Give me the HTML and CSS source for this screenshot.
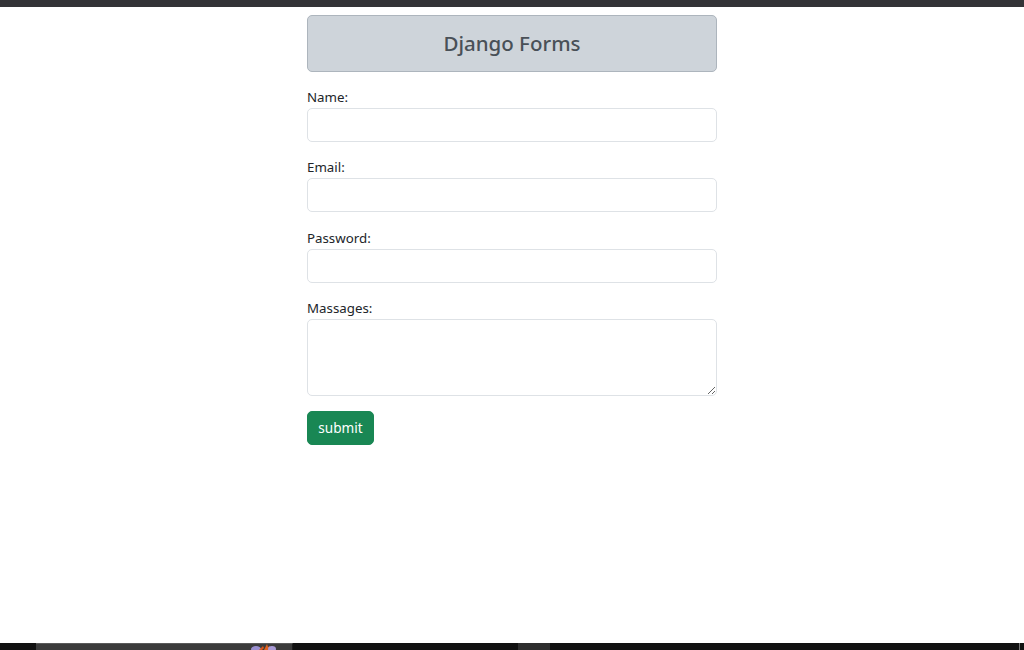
FILE: index.html
```html
<!DOCTYPE html>
<html lang="en">
<head>
<meta charset="utf-8">
<title>Django Forms</title>
<link rel="stylesheet" href="styles.css">
</head>
<body>
<div class="topbar"></div>
<main class="page">
  <div class="container">
    <div class="heading"><h1 class="title">Django Forms</h1></div>
    <form class="form">
      <div class="field">
        <label class="label" for="name">Name:</label>
        <input class="control" id="name" type="text">
      </div>
      <div class="field">
        <label class="label" for="email">Email:</label>
        <input class="control" id="email" type="email">
      </div>
      <div class="field">
        <label class="label" for="password">Password:</label>
        <input class="control" id="password" type="password">
      </div>
      <div class="field">
        <label class="label" for="msg">Massages:</label>
        <textarea class="control area" id="msg"></textarea>
      </div>
      <button class="btn" type="button">submit</button>
    </form>
  </div>
</main>
<div class="taskbar">
  <div class="tb-gap1"></div>
  <div class="tb-app">
    <svg class="tb-icon" width="26" height="7" viewBox="0 0 26 7"><ellipse cx="6" cy="6" rx="5" ry="3" fill="#9a8fd0"/><path d="M9 7 L13 3 L14 5 L12 7 Z" fill="#d9571b"/><path d="M14 7 L17 1 L18 4 L20 3 L19 7 Z" fill="#e2621e"/><ellipse cx="22" cy="6" rx="4" ry="3" fill="#a99ad6"/></svg>
  </div>
  <div class="tb-gap2"></div>
  <div class="tb-seg"></div>
  <div class="tb-gap3"></div>
  <div class="tb-end"></div>
</div>
</body>
</html>
```
FILE: styles.css
```css
* { box-sizing: border-box; }
html, body { margin: 0; padding: 0; }
body {
  width: 1024px;
  height: 650px;
  overflow: hidden;
  display: flex;
  flex-direction: column;
  background: #fff;
  font-family: "Noto Sans", "Open Sans", sans-serif;
  color: #212529;
  font-size: 14.4px;
  line-height: 1.5;
}
.topbar { height: 7px; background: #333337; flex: none; }
.page { flex: 1; display: flex; justify-content: center; }
.container { width: 410px; padding-top: 8px; }
.heading {
  height: 57px;
  background: #ced4da;
  border: 1px solid #adb5bd;
  border-radius: 5px;
  display: flex;
  align-items: center;
  justify-content: center;
}
.title {
  margin: 0;
  font-size: 20.5px;
  font-weight: 500;
  color: #495057;
  line-height: 1.2;
}
.form { margin-top: 14px; }
.field { margin-bottom: 14.4px; display: flex; flex-direction: column; }
.label { display: block; height: 22px; line-height: 22px; font-size: 13.3px; }
.control {
  display: block;
  width: 100%;
  height: 34px;
  border: 1px solid #dee2e6;
  border-radius: 5px;
  background: #fff;
  font: inherit;
  padding: 5px 11px;
}
.area { height: 77px; resize: vertical; }
.btn {
  width: 67px;
  height: 34px;
  background: #198754;
  color: #fff;
  border: 1px solid #198754;
  border-radius: 5px;
  font-family: inherit;
  font-size: 13.6px;
  padding: 0;
}
.taskbar { height: 7px; flex: none; background: #111; display: flex; }
.tb-gap1 { width: 36px; }
.tb-app { width: 257px; background: #3b3b3b; border-top: 1px solid #5a5a5a; border-right: 1px solid #1c1c1c; position: relative; }
.tb-icon { position: absolute; left: 214px; top: -1px; }
.tb-gap2 { width: 225px; }
.tb-seg { width: 32px; background: #2e2e2e; }
.tb-gap3 { width: 469px; }
.tb-end { width: 1px; background: #777; }
```
